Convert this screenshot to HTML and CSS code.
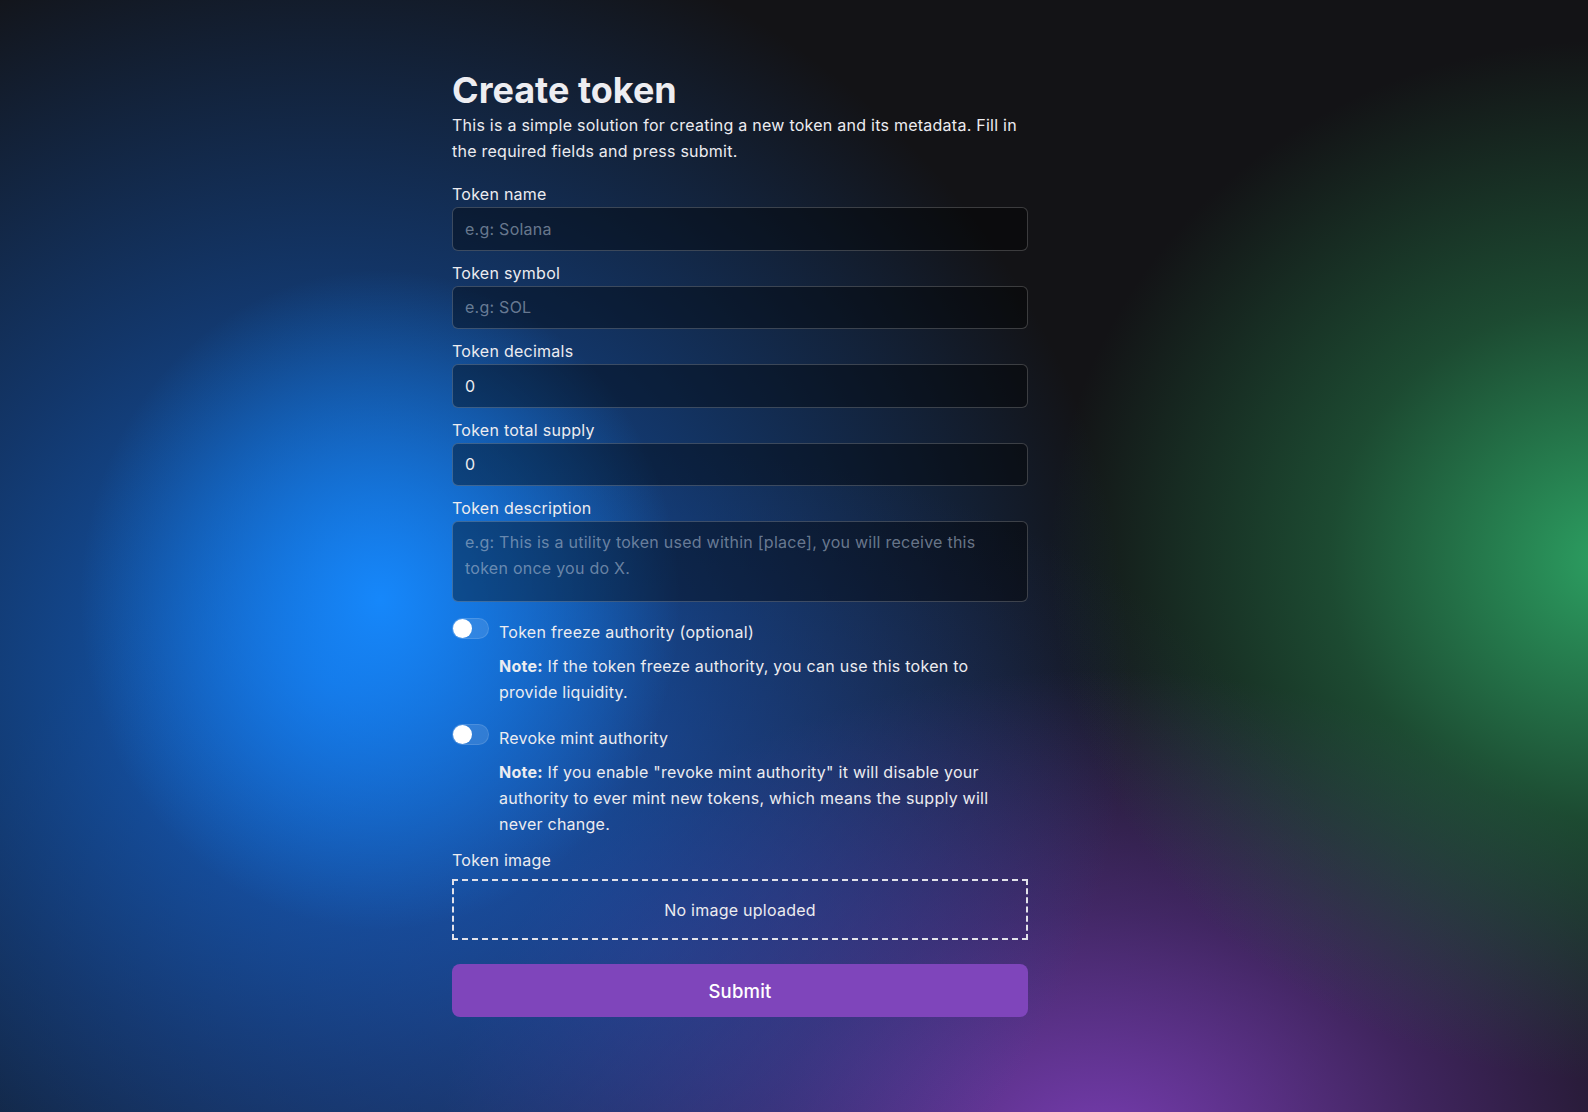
FILE: index.html
```html
<!DOCTYPE html>
<html lang="en">
<head>
<meta charset="utf-8">
<title>Create token</title>
<link rel="stylesheet" href="styles.css">
</head>
<body>
<main class="page">
  <form class="form">
    <h1 class="title">Create token</h1>
    <p class="intro">This is a simple solution for creating a new token and its metadata. Fill in the required fields and press submit.</p>

    <div class="field">
      <label class="label">Token name</label>
      <input class="input" type="text" placeholder="e.g: Solana">
    </div>
    <div class="field">
      <label class="label">Token symbol</label>
      <input class="input" type="text" placeholder="e.g: SOL">
    </div>
    <div class="field">
      <label class="label">Token decimals</label>
      <input class="input" type="text" value="0">
    </div>
    <div class="field">
      <label class="label">Token total supply</label>
      <input class="input" type="text" value="0">
    </div>
    <div class="field">
      <label class="label">Token description</label>
      <textarea class="input textarea" placeholder="e.g: This is a utility token used within [place], you will receive this token once you do X."></textarea>
    </div>

    <div class="toggle-block first">
      <div class="toggle-row">
        <span class="switch"><span class="thumb"></span></span>
        <span class="toggle-label">Token freeze authority (optional)</span>
      </div>
      <p class="note"><strong>Note:</strong> If the token freeze authority, you can use this token to provide liquidity.</p>
    </div>

    <div class="toggle-block last">
      <div class="toggle-row">
        <span class="switch"><span class="thumb"></span></span>
        <span class="toggle-label">Revoke mint authority</span>
      </div>
      <p class="note"><strong>Note:</strong> If you enable "revoke mint authority" it will disable your authority to ever mint new tokens, which means the supply will never change.</p>
    </div>

    <div class="field image-field">
      <label class="label">Token image</label>
      <div class="dropzone">No image uploaded</div>
    </div>

    <button class="submit" type="button">Submit</button>
  </form>
</main>
</body>
</html>
```

FILE: styles.css
```css
* { box-sizing: border-box; }

html, body {
  margin: 0;
  padding: 0;
  min-height: 100%;
}

body {
  width: 1588px;
  height: 1112px;
  overflow: hidden;
  font-family: Inter, "Noto Sans", "Liberation Sans", sans-serif;
  color: #ececf0;
  background-color: #131316;
  background-image:
    radial-gradient(ellipse 300px 330px at 380px 600px, rgba(22,138,255,0.95) 0%, rgba(22,138,255,0) 100%),
    radial-gradient(ellipse 800px 780px at 330px 680px, rgba(18,105,215,0.9) 0%, rgba(18,90,190,0.5) 50%, rgba(18,60,120,0) 100%),
    radial-gradient(ellipse 560px 520px at 1610px 560px, rgba(44,160,98,1) 0%, rgba(36,120,72,0.55) 50%, rgba(30,70,45,0) 100%),
    radial-gradient(ellipse 660px 480px at 1100px 1150px, rgba(118,60,175,1) 0%, rgba(92,48,140,0.6) 50%, rgba(70,40,110,0) 100%),
    radial-gradient(ellipse 700px 500px at 650px 950px, rgba(55,55,125,0.6) 0%, rgba(40,60,120,0) 100%);
}

.page {
  width: 684px;
  margin: 0 auto;
  padding-top: 69px;
}

.form {
  width: 576px;
  display: flex;
  flex-direction: column;
  letter-spacing: 0.25px;
}

.title {
  margin: 0;
  font-size: 36px;
  line-height: 43px;
  font-weight: 700;
  letter-spacing: 0;
  color: #ededf1;
}

.intro {
  margin: 0 0 18px;
  font-size: 16px;
  line-height: 26px;
  color: #ececf0;
}

.field {
  display: flex;
  flex-direction: column;
  margin-bottom: 10px;
}

.label {
  font-size: 16px;
  line-height: 24px;
  margin-bottom: 1px;
  color: #ececf0;
}

.input {
  height: 43.5px;
  width: 100%;
  padding: 0 12px;
  border: 1px solid rgba(255,255,255,0.2);
  border-radius: 6px;
  background: rgba(0,0,0,0.38);
  color: #ececf0;
  font-family: inherit;
  font-size: 16px;
  letter-spacing: 0.25px;
  outline: none;
}

.input::placeholder {
  color: rgba(185,198,218,0.55);
}

.textarea {
  height: 81px;
  padding: 7px 12px;
  line-height: 26px;
  resize: none;
  display: block;
}

.toggle-block {
  margin-bottom: 20px;
}

.toggle-block.first {
  margin-top: 7px;
}

.toggle-block.last {
  margin-bottom: 11px;
}

.toggle-row {
  display: flex;
  align-items: flex-start;
}

.switch {
  width: 37px;
  height: 21px;
  margin-top: -1px;
  margin-right: 10px;
  border-radius: 11px;
  background: rgba(255,255,255,0.12);
  border: 1px solid rgba(255,255,255,0.12);
  padding: 0;
  display: flex;
  align-items: center;
  flex: none;
}

.thumb {
  width: 19px;
  height: 19px;
  border-radius: 50%;
  background: #ffffff;
}

.toggle-label {
  font-size: 16px;
  line-height: 26px;
  color: #ececf0;
}

.note {
  margin: 8px 0 0 47px;
  font-size: 16px;
  line-height: 26px;
  color: #ececf0;
}

.note strong {
  font-weight: 700;
}

.image-field {
  margin-bottom: 24px;
}

.image-field .label {
  margin-bottom: 7px;
}

.dropzone {
  height: 61px;
  border: 2px dashed #e2e2ea;
  display: flex;
  align-items: center;
  justify-content: center;
  font-size: 16px;
  color: #ececf0;
}

.submit {
  height: 53px;
  width: 100%;
  border: none;
  border-radius: 8px;
  background: #7f45bb;
  color: #ffffff;
  font-family: inherit;
  font-size: 18.5px;
  font-weight: 500;
  letter-spacing: 0.2px;
  cursor: pointer;
}
```
